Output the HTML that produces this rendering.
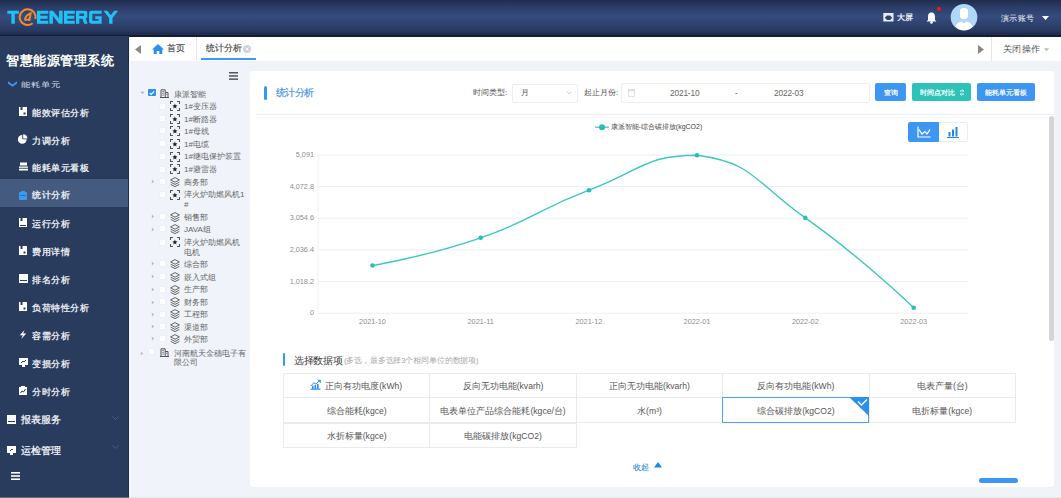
<!DOCTYPE html>
<html><head><meta charset="utf-8">
<style>
*{margin:0;padding:0;box-sizing:border-box}
html,body{width:1061px;height:498px;overflow:hidden;font-family:"Liberation Sans",sans-serif;background:#f0f3f8;position:relative}
.abs{position:absolute}
#hdr{left:0;top:0;width:1061px;height:37px;background:linear-gradient(#212c4c 0%,#2c3d68 20%,#364c7e 44%,#2f436f 65%,#27375f 84%,#202d50 93%,#161e36 96%,#131a2f 100%)}
#side{left:0;top:36px;width:129px;height:462px;background:#2a3c5e;overflow:hidden}
#tabs{left:130px;top:37px;width:931px;height:24px;background:#fff}
#tree{left:130px;top:61px;width:119px;height:437px;background:#f0f3f9}
#card{left:250px;top:70.5px;width:804px;height:416px;background:#fff;border-radius:3px}
.t{position:absolute;white-space:nowrap;line-height:1}
.mi{position:absolute;left:0;width:129px;height:28px}
.mi .tx{position:absolute;left:32px;top:9.5px;font-size:9px;letter-spacing:0.55px;-webkit-text-stroke:0.25px #f6f8fb;color:#f6f8fb;line-height:10px;white-space:nowrap}
.mi svg{position:absolute;left:19px;top:9.2px}
.tt{font-size:8px;color:#666;line-height:9px}
.btn{color:#fff;font-size:7px;line-height:19.5px;-webkit-text-stroke:0.2px #fff;text-align:center;border-radius:2px;white-space:nowrap}
.cell{border:1px solid #ebebeb;background:#fff;display:flex;align-items:center;justify-content:center;font-size:8.6px;color:#555;white-space:nowrap;padding-top:2.5px}
</style></head><body>
<div id="hdr" class="abs">
  <svg class="abs" style="left:0;top:0" width="130" height="36" viewBox="0 0 130 36">
    <g fill="#1ec2f7" fill-rule="evenodd">
    <path d="M7.3 10.7H18.9V13.7H14.8V23.7H11.4V13.7H7.3Z"/>
    <path d="M37 10.7H48.3V13.7H40.3V15.8H47.6V18.8H40.3V20.7H48.3V23.7H37Z"/>
    <path d="M49.4 23.7V10.7H53L59.1 18.6V10.7H62.6V23.7H59.1L52.9 15.7V23.7Z"/>
    <path d="M64 10.7H74.8V13.7H67.2V15.8H74.2V18.8H67.2V20.7H74.8V23.7H64Z"/>
    <path d="M76 23.7V10.7H85.3Q87.3 10.7 87.3 12.7V16.4Q87.3 18 85.8 18.4L87.6 23.7H84.1L82.6 18.8H79.3V23.7ZM79.3 13.6V16H84.1V13.6Z"/>
    <path d="M101.7 10.7H91.2Q89.1 10.7 89.1 12.8V21.6Q89.1 23.7 91.2 23.7H101.7V16.2H95.3V19H98.5V20.8H92.3V13.7H101.7Z"/>
    <path d="M103.4 10.7H107.4L110.8 15.3L114.2 10.7H118.1L112.5 18.1V23.7H109.1V18.1Z"/>
    </g>
    <path d="M32.6 23.3A7.9 7.9 0 1 1 35.3 19.1" stroke="#f08a2c" stroke-width="2" fill="none"/>
    <path d="M31.9 12.1L30.3 21H28L28.2 19.9C27.2 20.8 26 21.2 25 20.8C23.7 20.2 23.9 18.3 24.9 16.7C26.4 14.3 29.1 12.5 31.9 12.1ZM29.5 14.9C28 15.6 26.6 17 26.3 18.4C26.2 19.2 26.9 19.3 27.7 18.8L28.9 17.8Z" fill="#f08a2c" fill-rule="evenodd"/>
  </svg>
  <!-- right -->
  <svg class="abs" style="left:883px;top:12.5px" width="11" height="9" viewBox="0 0 11 9"><rect x="0.3" y="0" width="10.2" height="8.5" fill="#e8ecf4"/><path d="M1.8 4.8L4 2.6H7L9.2 4.8L7 7H4Z" fill="#2d4170"/></svg>
  <div class="t" style="left:896.5px;top:14px;font-size:8px;-webkit-text-stroke:0.2px #fff;letter-spacing:0.4px;color:#fff">大屏</div>
  <svg class="abs" style="left:926px;top:12px" width="11" height="12" viewBox="0 0 11 12"><path d="M5.5 0.5 C2.5 0.5 2 3 2 5.5 L2 8 L0.5 9.5 L10.5 9.5 L9 8 L9 5.5 C9 3 8.5 0.5 5.5 0.5Z" fill="#fff"/><circle cx="5.5" cy="10.5" r="1.3" fill="#fff"/></svg>
  <div class="abs" style="left:936.5px;top:6.5px;width:4px;height:4px;border-radius:50%;background:#f01818"></div>
  <svg class="abs" style="left:950px;top:3px" width="28" height="28" viewBox="0 0 28 28"><circle cx="14" cy="14.2" r="13.3" fill="#b0d7f8"/><path d="M10 7.5Q10 5 14 5Q18 5 18 7.5V12.5Q18 16.3 14 16.3Q10 16.3 10 12.5Z" fill="#fff"/><path d="M5.2 23.5Q7 19.2 12 18.6L14 20.6L16 18.6Q21 19.2 22.8 23.5Q19.5 27.2 14 27.2Q8.5 27.2 5.2 23.5Z" fill="#fff"/></svg>
  <div class="t" style="left:1001px;top:14.5px;font-size:8px;letter-spacing:0.35px;color:#eef1f7">演示账号</div>
  <svg class="abs" style="left:1042px;top:16px" width="7" height="4" viewBox="0 0 7 4"><path d="M0 0 L7 0 L3.5 4Z" fill="#fff"/></svg>
</div>

<div id="side" class="abs">
  <div class="t" style="left:6px;top:17.5px;font-size:13px;font-weight:bold;color:#fff;letter-spacing:0.55px">智慧能源管理系统</div>
  <div class="abs" style="left:0;top:44px;width:129px;height:9px;overflow:hidden">
    <svg class="abs" style="left:8px;top:1px" width="9" height="6" viewBox="0 0 9 6"><path d="M0 0.3L4.5 3.6L9 0.3V2.4L4.5 5.7L0 2.4Z" fill="#3a9af0"/></svg>
    <div class="t" style="left:21px;top:-1.5px;font-size:9.5px;color:#dfe4ee;transform:scaleY(0.75);transform-origin:0 100%">能耗单元</div>
  </div>
  <div class="mi" style="top:62px"><svg width="8" height="9" viewBox="0 0 8 9"><rect width="8" height="9" fill="#fff"/><rect x="1.5" y="0" width="2" height="3" fill="#2a3c5e"/><rect x="4.5" y="5.5" width="2" height="2" fill="#2a3c5e"/></svg><div class="tx">能效评估分析</div></div>
  <div class="mi" style="top:90px"><svg width="10" height="10" viewBox="0 0 10 10" style="left:18px;top:8px"><path d="M4.3 5.3L4.3 0.9A4.4 4.4 0 1 0 8.7 5.3Z" fill="#fff"/><path d="M5.2 4.4L5.2 0.2A4.2 4.2 0 0 1 9.4 4.4Z" fill="#fff"/></svg><div class="tx">力调分析</div></div>
  <div class="mi" style="top:117px"><svg width="9" height="9" viewBox="0 0 9 9"><rect x="1" y="0.5" width="7" height="3" fill="#fff"/><rect x="0" y="4.5" width="9" height="4" fill="#fff"/><rect x="0" y="5.8" width="9" height="0.9" fill="#2a3c5e"/></svg><div class="tx">能耗单元看板</div></div>
  <div class="mi" style="top:143px;height:28px;background:#445b7f"><svg width="8" height="9" viewBox="0 0 8 9" style="top:11.5px"><rect y="1" width="8" height="8" rx="1" fill="#3a9af0"/><rect x="2" y="0" width="4" height="2" fill="#3a9af0"/><rect x="1.5" y="4" width="5" height="1" fill="#2a6fb8"/></svg><div class="tx" style="top:11px">统计分析</div></div>
  <div class="mi" style="top:173px"><svg width="8" height="9" viewBox="0 0 8 9"><rect width="8" height="9" fill="#fff"/><rect x="1.5" y="0" width="2" height="3" fill="#2a3c5e"/><rect x="1" y="7" width="6" height="1" fill="#2a3c5e"/></svg><div class="tx">运行分析</div></div>
  <div class="mi" style="top:201px"><svg width="8" height="9" viewBox="0 0 8 9"><rect width="8" height="9" fill="#fff"/><rect x="1.5" y="0" width="2" height="3" fill="#2a3c5e"/><rect x="4.5" y="5.5" width="2" height="2" fill="#2a3c5e"/></svg><div class="tx">费用详情</div></div>
  <div class="mi" style="top:229px"><svg width="9" height="9" viewBox="0 0 9 9"><rect width="9" height="9" fill="#fff"/><rect x="1" y="6" width="7" height="1" fill="#2a3c5e"/></svg><div class="tx">排名分析</div></div>
  <div class="mi" style="top:257px"><svg width="8" height="9" viewBox="0 0 8 9"><rect width="8" height="9" fill="#fff"/><rect x="1.5" y="0" width="2" height="3" fill="#2a3c5e"/><rect x="4.5" y="5.5" width="2" height="2" fill="#2a3c5e"/></svg><div class="tx">负荷特性分析</div></div>
  <div class="mi" style="top:285px"><svg width="8" height="9" viewBox="0 0 8 9"><path d="M5.5 0 L0.8 5.2 L3.8 5.2 L2.3 9 L7.2 3.6 L4.2 3.6Z" fill="#fff"/></svg><div class="tx">容需分析</div></div>
  <div class="mi" style="top:313px"><svg width="9" height="9" viewBox="0 0 9 9"><rect width="9" height="7" fill="#fff"/><rect x="3" y="7" width="3" height="2" fill="#fff"/><path d="M2 5 L4 3 L5 4 L7 2" stroke="#2a3c5e" fill="none"/></svg><div class="tx">变损分析</div></div>
  <div class="mi" style="top:341px"><svg width="8" height="9" viewBox="0 0 8 9"><rect y="1" width="8" height="8" fill="#fff"/><rect x="2" y="0" width="4" height="2" fill="#fff"/><path d="M1.5 7 L3 5 L4.5 6 L6.5 3" stroke="#2a3c5e" fill="none"/></svg><div class="tx">分时分析</div></div>
  <div class="mi" style="top:369px"><svg width="9" height="9" viewBox="0 0 9 9" style="left:7px;top:10px"><rect width="9" height="9" fill="#fff"/><rect x="1" y="6" width="7" height="1" fill="#2a3c5e"/></svg><div class="tx" style="left:21px;top:10px;font-size:10px;letter-spacing:0">报表服务</div><svg width="7" height="5" viewBox="0 0 7 5" style="left:112px;top:10.5px"><path d="M0.5 0.5 L3.5 3.5 L6.5 0.5" stroke="#4a5e80" fill="none"/></svg></div>
  <div class="mi" style="top:400px"><svg width="9" height="9" viewBox="0 0 9 9" style="left:7px;top:10px"><rect width="9" height="7" fill="#fff"/><rect x="3" y="7" width="3" height="2" fill="#fff"/><path d="M3 5 L5 3 L6 4" stroke="#2a3c5e" fill="none"/></svg><div class="tx" style="left:21px;top:10px;font-size:10px;letter-spacing:0">运检管理</div><svg width="7" height="5" viewBox="0 0 7 5" style="left:112px;top:8.5px"><path d="M0.5 0.5 L3.5 3.5 L6.5 0.5" stroke="#4a5e80" fill="none"/></svg></div>
  <svg class="abs" style="left:11px;top:435.5px" width="9" height="8" viewBox="0 0 9 8"><rect y="0" width="9" height="1.6" fill="#fff"/><rect y="3.2" width="9" height="1.6" fill="#fff"/><rect y="6.4" width="9" height="1.6" fill="#fff"/></svg>
</div>
<div class="abs" style="left:128px;top:37px;width:1px;height:461px;background:#1c2848"></div><div class="abs" style="left:129px;top:61px;width:2px;height:436px;background:#fafbfd"></div>

<div id="tabs" class="abs">
  <svg class="abs" style="left:4.5px;top:8px" width="6" height="9" viewBox="0 0 6 9"><path d="M6 0 L0 4.5 L6 9Z" fill="#888"/></svg>
  <svg class="abs" style="left:22px;top:7.4px" width="12" height="10" viewBox="0 0 12 10"><path d="M6 0 L12 5.5 L10.3 5.5 L10.3 10 L7.3 10 L7.3 7 L4.7 7 L4.7 10 L1.7 10 L1.7 5.5 L0 5.5Z" fill="#2b8ff0"/></svg>
  <div class="t" style="left:36.5px;top:7px;font-size:9px;color:#484848;-webkit-text-stroke:0.15px #484848">首页</div>
  <div class="abs" style="left:66px;top:0;width:1px;height:24px;background:#e6e6e6"></div>
  <div class="t" style="left:75.5px;top:7px;font-size:9px;color:#484848;-webkit-text-stroke:0.15px #484848">统计分析</div>
  <svg class="abs" style="left:113px;top:8px" width="8" height="8" viewBox="0 0 8 8"><circle cx="4" cy="4" r="4" fill="#d2d2d2"/><path d="M2.6 2.6L5.4 5.4M5.4 2.6L2.6 5.4" stroke="#fff" stroke-width="0.9"/></svg>
  <div class="abs" style="left:71px;top:21px;width:55px;height:2px;background:#3a9af5"></div>
  <svg class="abs" style="left:848px;top:8px" width="6" height="9" viewBox="0 0 6 9"><path d="M0 0 L6 4.5 L0 9Z" fill="#888"/></svg>
  <div class="abs" style="left:861px;top:0;width:1px;height:24px;background:#e6e6e6"></div>
  <div class="t" style="left:872.5px;top:7.5px;font-size:9px;letter-spacing:0.6px;color:#555">关闭操作</div>
  <svg class="abs" style="left:914px;top:10.5px" width="6" height="4" viewBox="0 0 7 4"><path d="M0 0 L6 0 L3 3.5Z" fill="#bbb"/></svg>
</div>
<div id="tree" class="abs">
<div class="abs" style="left:0;top:-2px;width:119px;height:439px">
  <svg class="abs" style="left:98.5px;top:12.5px" width="9" height="8" viewBox="0 0 9 8"><rect y="0" width="9" height="1.5" fill="#555"/><rect y="3.2" width="9" height="1.5" fill="#555"/><rect y="6.4" width="9" height="1.5" fill="#555"/></svg>
<svg class="abs" style="left:10px;top:32px" width="5" height="4" viewBox="0 0 5 4"><path d="M0.5 0.8H4.5L2.5 3Z" fill="#b0b0b0"/></svg>
<div class="abs" style="left:18px;top:29.7px;width:7.6px;height:7.6px;background:#2b8ff0;border-radius:1px"><svg class="abs" style="left:0;top:0" width="8" height="8" viewBox="0 0 8 8"><path d="M1.6 3.9L3.2 5.4L6.2 2.3" stroke="#fff" stroke-width="1.2" fill="none"/></svg></div>
<svg class="abs" style="left:30.3px;top:29.6px" width="9" height="9" viewBox="0 0 9 9"><path d="M1 8.5V0.8H5.2V8.5M5.2 3.5H8V8.5M0 8.5H9" stroke="#555" stroke-width="1" fill="none"/><path d="M2.3 2.5H3.9M2.3 4.3H3.9M2.3 6.1H3.9M6 5.3H7.2" stroke="#555" stroke-width="0.8"/></svg>
<div class="t tt" style="left:44px;top:30.5px">康派智能</div>
<div class="abs" style="left:29px;top:43.7px;width:7px;height:7px;background:#fff;border:1px solid #edf0f4;border-radius:1px"></div>
<svg class="abs" style="left:40px;top:42.4px" width="10" height="10" viewBox="0 0 10 10"><path d="M0.5 3V0.5H3M7 0.5H9.5V3M9.5 7V9.5H7M3 9.5H0.5V7" stroke="#555" stroke-width="1.1" fill="none"/><path d="M4.90 2.60L5.61 4.33L7.47 4.47L6.04 5.67L6.49 7.48L4.90 6.50L3.31 7.48L3.76 5.67L2.33 4.47L4.19 4.33Z" fill="#222"/></svg>
<div class="t tt" style="left:54px;top:43.3px">1#变压器</div>
<div class="abs" style="left:29px;top:56px;width:7px;height:7px;background:#fff;border:1px solid #edf0f4;border-radius:1px"></div>
<svg class="abs" style="left:40px;top:54.7px" width="10" height="10" viewBox="0 0 10 10"><path d="M0.5 3V0.5H3M7 0.5H9.5V3M9.5 7V9.5H7M3 9.5H0.5V7" stroke="#555" stroke-width="1.1" fill="none"/><path d="M4.90 2.60L5.61 4.33L7.47 4.47L6.04 5.67L6.49 7.48L4.90 6.50L3.31 7.48L3.76 5.67L2.33 4.47L4.19 4.33Z" fill="#222"/></svg>
<div class="t tt" style="left:54px;top:55.6px">1#断路器</div>
<div class="abs" style="left:29px;top:68.4px;width:7px;height:7px;background:#fff;border:1px solid #edf0f4;border-radius:1px"></div>
<svg class="abs" style="left:40px;top:67.1px" width="10" height="10" viewBox="0 0 10 10"><path d="M0.5 3V0.5H3M7 0.5H9.5V3M9.5 7V9.5H7M3 9.5H0.5V7" stroke="#555" stroke-width="1.1" fill="none"/><path d="M4.90 2.60L5.61 4.33L7.47 4.47L6.04 5.67L6.49 7.48L4.90 6.50L3.31 7.48L3.76 5.67L2.33 4.47L4.19 4.33Z" fill="#222"/></svg>
<div class="t tt" style="left:54px;top:68px">1#母线</div>
<div class="abs" style="left:29px;top:81.2px;width:7px;height:7px;background:#fff;border:1px solid #edf0f4;border-radius:1px"></div>
<svg class="abs" style="left:40px;top:79.9px" width="10" height="10" viewBox="0 0 10 10"><path d="M0.5 3V0.5H3M7 0.5H9.5V3M9.5 7V9.5H7M3 9.5H0.5V7" stroke="#555" stroke-width="1.1" fill="none"/><path d="M4.90 2.60L5.61 4.33L7.47 4.47L6.04 5.67L6.49 7.48L4.90 6.50L3.31 7.48L3.76 5.67L2.33 4.47L4.19 4.33Z" fill="#222"/></svg>
<div class="t tt" style="left:54px;top:80.8px">1#电缆</div>
<div class="abs" style="left:29px;top:93.8px;width:7px;height:7px;background:#fff;border:1px solid #edf0f4;border-radius:1px"></div>
<svg class="abs" style="left:40px;top:92.5px" width="10" height="10" viewBox="0 0 10 10"><path d="M0.5 3V0.5H3M7 0.5H9.5V3M9.5 7V9.5H7M3 9.5H0.5V7" stroke="#555" stroke-width="1.1" fill="none"/><path d="M4.90 2.60L5.61 4.33L7.47 4.47L6.04 5.67L6.49 7.48L4.90 6.50L3.31 7.48L3.76 5.67L2.33 4.47L4.19 4.33Z" fill="#222"/></svg>
<div class="t tt" style="left:54px;top:93.4px">1#继电保护装置</div>
<div class="abs" style="left:29px;top:106.6px;width:7px;height:7px;background:#fff;border:1px solid #edf0f4;border-radius:1px"></div>
<svg class="abs" style="left:40px;top:105.3px" width="10" height="10" viewBox="0 0 10 10"><path d="M0.5 3V0.5H3M7 0.5H9.5V3M9.5 7V9.5H7M3 9.5H0.5V7" stroke="#555" stroke-width="1.1" fill="none"/><path d="M4.90 2.60L5.61 4.33L7.47 4.47L6.04 5.67L6.49 7.48L4.90 6.50L3.31 7.48L3.76 5.67L2.33 4.47L4.19 4.33Z" fill="#222"/></svg>
<div class="t tt" style="left:54px;top:106.2px">1#避雷器</div>
<svg class="abs" style="left:21px;top:120.3px" width="4" height="5" viewBox="0 0 4 5"><path d="M0.8 0.5V4.5L3.2 2.5Z" fill="#bdbdbd"/></svg>
<div class="abs" style="left:29px;top:119.2px;width:7px;height:7px;background:#fff;border:1px solid #edf0f4;border-radius:1px"></div>
<svg class="abs" style="left:40px;top:117.9px" width="10" height="10" viewBox="0 0 10 10"><path d="M5 0.6L9.4 2.9L5 5.2L0.6 2.9Z" stroke="#555" stroke-width="0.9" fill="none"/><path d="M0.7 5.2L5 7.4L9.3 5.2M0.7 7.4L5 9.6L9.3 7.4" stroke="#555" stroke-width="0.9" fill="none"/></svg>
<div class="t tt" style="left:54px;top:118.8px">商务部</div>
<div class="abs" style="left:29px;top:131.8px;width:7px;height:7px;background:#fff;border:1px solid #edf0f4;border-radius:1px"></div>
<svg class="abs" style="left:40px;top:130.5px" width="10" height="10" viewBox="0 0 10 10"><path d="M0.5 3V0.5H3M7 0.5H9.5V3M9.5 7V9.5H7M3 9.5H0.5V7" stroke="#555" stroke-width="1.1" fill="none"/><path d="M4.90 2.60L5.61 4.33L7.47 4.47L6.04 5.67L6.49 7.48L4.90 6.50L3.31 7.48L3.76 5.67L2.33 4.47L4.19 4.33Z" fill="#222"/></svg>
<div class="t tt" style="left:54px;top:131.4px">淬火炉助燃风机1</div>
<div class="t tt" style="left:54px;top:140.6px">#</div>
<svg class="abs" style="left:21px;top:155.1px" width="4" height="5" viewBox="0 0 4 5"><path d="M0.8 0.5V4.5L3.2 2.5Z" fill="#bdbdbd"/></svg>
<div class="abs" style="left:29px;top:154px;width:7px;height:7px;background:#fff;border:1px solid #edf0f4;border-radius:1px"></div>
<svg class="abs" style="left:40px;top:152.7px" width="10" height="10" viewBox="0 0 10 10"><path d="M5 0.6L9.4 2.9L5 5.2L0.6 2.9Z" stroke="#555" stroke-width="0.9" fill="none"/><path d="M0.7 5.2L5 7.4L9.3 5.2M0.7 7.4L5 9.6L9.3 7.4" stroke="#555" stroke-width="0.9" fill="none"/></svg>
<div class="t tt" style="left:54px;top:153.6px">销售部</div>
<svg class="abs" style="left:21px;top:167.5px" width="4" height="5" viewBox="0 0 4 5"><path d="M0.8 0.5V4.5L3.2 2.5Z" fill="#bdbdbd"/></svg>
<div class="abs" style="left:29px;top:166.4px;width:7px;height:7px;background:#fff;border:1px solid #edf0f4;border-radius:1px"></div>
<svg class="abs" style="left:40px;top:165.1px" width="10" height="10" viewBox="0 0 10 10"><path d="M5 0.6L9.4 2.9L5 5.2L0.6 2.9Z" stroke="#555" stroke-width="0.9" fill="none"/><path d="M0.7 5.2L5 7.4L9.3 5.2M0.7 7.4L5 9.6L9.3 7.4" stroke="#555" stroke-width="0.9" fill="none"/></svg>
<div class="t tt" style="left:54px;top:166px">JAVA组</div>
<div class="abs" style="left:29px;top:179.7px;width:7px;height:7px;background:#fff;border:1px solid #edf0f4;border-radius:1px"></div>
<svg class="abs" style="left:40px;top:178.4px" width="10" height="10" viewBox="0 0 10 10"><path d="M0.5 3V0.5H3M7 0.5H9.5V3M9.5 7V9.5H7M3 9.5H0.5V7" stroke="#555" stroke-width="1.1" fill="none"/><path d="M4.90 2.60L5.61 4.33L7.47 4.47L6.04 5.67L6.49 7.48L4.90 6.50L3.31 7.48L3.76 5.67L2.33 4.47L4.19 4.33Z" fill="#222"/></svg>
<div class="t tt" style="left:54px;top:179.3px">淬火炉助燃风机</div>
<div class="t tt" style="left:54px;top:188.5px">电机</div>
<svg class="abs" style="left:21px;top:202.1px" width="4" height="5" viewBox="0 0 4 5"><path d="M0.8 0.5V4.5L3.2 2.5Z" fill="#bdbdbd"/></svg>
<div class="abs" style="left:29px;top:201px;width:7px;height:7px;background:#fff;border:1px solid #edf0f4;border-radius:1px"></div>
<svg class="abs" style="left:40px;top:199.7px" width="10" height="10" viewBox="0 0 10 10"><path d="M5 0.6L9.4 2.9L5 5.2L0.6 2.9Z" stroke="#555" stroke-width="0.9" fill="none"/><path d="M0.7 5.2L5 7.4L9.3 5.2M0.7 7.4L5 9.6L9.3 7.4" stroke="#555" stroke-width="0.9" fill="none"/></svg>
<div class="t tt" style="left:54px;top:200.6px">综合部</div>
<svg class="abs" style="left:21px;top:215px" width="4" height="5" viewBox="0 0 4 5"><path d="M0.8 0.5V4.5L3.2 2.5Z" fill="#bdbdbd"/></svg>
<div class="abs" style="left:29px;top:213.9px;width:7px;height:7px;background:#fff;border:1px solid #edf0f4;border-radius:1px"></div>
<svg class="abs" style="left:40px;top:212.6px" width="10" height="10" viewBox="0 0 10 10"><path d="M5 0.6L9.4 2.9L5 5.2L0.6 2.9Z" stroke="#555" stroke-width="0.9" fill="none"/><path d="M0.7 5.2L5 7.4L9.3 5.2M0.7 7.4L5 9.6L9.3 7.4" stroke="#555" stroke-width="0.9" fill="none"/></svg>
<div class="t tt" style="left:54px;top:213.5px">嵌入式组</div>
<svg class="abs" style="left:21px;top:227.9px" width="4" height="5" viewBox="0 0 4 5"><path d="M0.8 0.5V4.5L3.2 2.5Z" fill="#bdbdbd"/></svg>
<div class="abs" style="left:29px;top:226.8px;width:7px;height:7px;background:#fff;border:1px solid #edf0f4;border-radius:1px"></div>
<svg class="abs" style="left:40px;top:225.5px" width="10" height="10" viewBox="0 0 10 10"><path d="M5 0.6L9.4 2.9L5 5.2L0.6 2.9Z" stroke="#555" stroke-width="0.9" fill="none"/><path d="M0.7 5.2L5 7.4L9.3 5.2M0.7 7.4L5 9.6L9.3 7.4" stroke="#555" stroke-width="0.9" fill="none"/></svg>
<div class="t tt" style="left:54px;top:226.4px">生产部</div>
<svg class="abs" style="left:21px;top:240.5px" width="4" height="5" viewBox="0 0 4 5"><path d="M0.8 0.5V4.5L3.2 2.5Z" fill="#bdbdbd"/></svg>
<div class="abs" style="left:29px;top:239.4px;width:7px;height:7px;background:#fff;border:1px solid #edf0f4;border-radius:1px"></div>
<svg class="abs" style="left:40px;top:238.1px" width="10" height="10" viewBox="0 0 10 10"><path d="M5 0.6L9.4 2.9L5 5.2L0.6 2.9Z" stroke="#555" stroke-width="0.9" fill="none"/><path d="M0.7 5.2L5 7.4L9.3 5.2M0.7 7.4L5 9.6L9.3 7.4" stroke="#555" stroke-width="0.9" fill="none"/></svg>
<div class="t tt" style="left:54px;top:239px">财务部</div>
<svg class="abs" style="left:21px;top:252.8px" width="4" height="5" viewBox="0 0 4 5"><path d="M0.8 0.5V4.5L3.2 2.5Z" fill="#bdbdbd"/></svg>
<div class="abs" style="left:29px;top:251.7px;width:7px;height:7px;background:#fff;border:1px solid #edf0f4;border-radius:1px"></div>
<svg class="abs" style="left:40px;top:250.4px" width="10" height="10" viewBox="0 0 10 10"><path d="M5 0.6L9.4 2.9L5 5.2L0.6 2.9Z" stroke="#555" stroke-width="0.9" fill="none"/><path d="M0.7 5.2L5 7.4L9.3 5.2M0.7 7.4L5 9.6L9.3 7.4" stroke="#555" stroke-width="0.9" fill="none"/></svg>
<div class="t tt" style="left:54px;top:251.3px">工程部</div>
<svg class="abs" style="left:21px;top:265.2px" width="4" height="5" viewBox="0 0 4 5"><path d="M0.8 0.5V4.5L3.2 2.5Z" fill="#bdbdbd"/></svg>
<div class="abs" style="left:29px;top:264.1px;width:7px;height:7px;background:#fff;border:1px solid #edf0f4;border-radius:1px"></div>
<svg class="abs" style="left:40px;top:262.8px" width="10" height="10" viewBox="0 0 10 10"><path d="M5 0.6L9.4 2.9L5 5.2L0.6 2.9Z" stroke="#555" stroke-width="0.9" fill="none"/><path d="M0.7 5.2L5 7.4L9.3 5.2M0.7 7.4L5 9.6L9.3 7.4" stroke="#555" stroke-width="0.9" fill="none"/></svg>
<div class="t tt" style="left:54px;top:263.7px">渠道部</div>
<svg class="abs" style="left:21px;top:277.3px" width="4" height="5" viewBox="0 0 4 5"><path d="M0.8 0.5V4.5L3.2 2.5Z" fill="#bdbdbd"/></svg>
<div class="abs" style="left:29px;top:276.2px;width:7px;height:7px;background:#fff;border:1px solid #edf0f4;border-radius:1px"></div>
<svg class="abs" style="left:40px;top:274.9px" width="10" height="10" viewBox="0 0 10 10"><path d="M5 0.6L9.4 2.9L5 5.2L0.6 2.9Z" stroke="#555" stroke-width="0.9" fill="none"/><path d="M0.7 5.2L5 7.4L9.3 5.2M0.7 7.4L5 9.6L9.3 7.4" stroke="#555" stroke-width="0.9" fill="none"/></svg>
<div class="t tt" style="left:54px;top:275.8px">外贸部</div>
<svg class="abs" style="left:10px;top:291.7px" width="4" height="5" viewBox="0 0 4 5"><path d="M0.8 0.5V4.5L3.2 2.5Z" fill="#bdbdbd"/></svg>
<div class="abs" style="left:18px;top:289.4px;width:7px;height:7px;background:#fff;border:1px solid #edf0f4;border-radius:1px"></div>
<svg class="abs" style="left:30.3px;top:289.3px" width="9" height="9" viewBox="0 0 9 9"><path d="M1 8.5V0.8H5.2V8.5M5.2 3.5H8V8.5M0 8.5H9" stroke="#555" stroke-width="1" fill="none"/><path d="M2.3 2.5H3.9M2.3 4.3H3.9M2.3 6.1H3.9M6 5.3H7.2" stroke="#555" stroke-width="0.8"/></svg>
<div class="t tt" style="left:44px;top:290.2px">河南航天金穗电子有</div>
<div class="t tt" style="left:44px;top:299.4px">限公司</div>
</div>
</div>
<div id="card" class="abs"></div>
<div class="abs" style="left:256px;top:114px;width:798px;height:1px;background:#eceef1"></div>
<div class="abs" style="left:256px;top:117px;width:798px;height:1px;background:#f5f6f7"></div>
<div class="abs" style="left:263.5px;top:85.5px;width:3px;height:14px;border-radius:1.5px;background:#3399f3"></div>
<div class="t" style="left:275.5px;top:88px;font-size:10px;letter-spacing:-0.5px;color:#3a8ee6;-webkit-text-stroke:0.15px #3a8ee6">统计分析</div>
<div class="t" style="left:473px;top:89px;font-size:8px;color:#555">时间类型:</div>
<div class="abs" style="left:512px;top:83.5px;width:66px;height:19.5px;border:1px solid #eceef1;border-radius:2px;background:#fff"></div>
<div class="t" style="left:521px;top:89px;font-size:8px;color:#555">月</div>
<svg class="abs" style="left:566px;top:91px" width="6" height="4" viewBox="0 0 6 4"><path d="M0.5 0.5L3 3L5.5 0.5" stroke="#c8c8c8" stroke-width="0.8" fill="none"/></svg>
<div class="t" style="left:584px;top:89px;font-size:8px;color:#555">起止月份:</div>
<div class="abs" style="left:621px;top:83px;width:249px;height:19.5px;border:1px solid #eceef1;border-radius:2px;background:#fff"></div>
<svg class="abs" style="left:627.8px;top:89.3px" width="7" height="8" viewBox="0 0 7 8"><rect x="0.5" y="0.5" width="6" height="6.8" fill="none" stroke="#dcdcdc" stroke-width="0.9"/><rect x="0.5" y="0.5" width="6" height="1.8" fill="#dcdcdc"/></svg>
<div class="t" style="left:670px;top:89px;font-size:8.3px;letter-spacing:-0.15px;color:#666">2021-10</div>
<div class="t" style="left:735px;top:89px;font-size:8.3px;color:#666">-</div>
<div class="t" style="left:774px;top:89px;font-size:8.3px;letter-spacing:-0.15px;color:#666">2022-03</div>
<div class="abs btn" style="left:875px;top:83px;width:31px;height:18px;background:#3d96f2">查询</div>
<div class="abs btn" style="left:911.5px;top:83px;width:59.5px;height:18px;background:#2ec3b9;padding-right:7px">时间点对比<svg class="abs" style="left:47px;top:5.5px" width="6" height="7" viewBox="0 0 6 7"><path d="M1 2H5L3.5 0.5M5 5H1L2.5 6.5" stroke="#fff" stroke-width="1" fill="none"/></svg></div>
<div class="abs btn" style="left:977px;top:83px;width:57.5px;height:18px;background:#3d96f2">能耗单元看板</div>
<svg class="abs" style="left:0;top:0" width="1061" height="498" viewBox="0 0 1061 498" font-family="Liberation Sans">
<line x1="318" y1="155" x2="968" y2="155" stroke="#eeeeee" stroke-width="1"/><line x1="318" y1="186.6" x2="968" y2="186.6" stroke="#eeeeee" stroke-width="1"/><line x1="318" y1="218.2" x2="968" y2="218.2" stroke="#eeeeee" stroke-width="1"/><line x1="318" y1="249.8" x2="968" y2="249.8" stroke="#eeeeee" stroke-width="1"/><line x1="318" y1="281.4" x2="968" y2="281.4" stroke="#eeeeee" stroke-width="1"/><line x1="318" y1="313.2" x2="968" y2="313.2" stroke="#eeeeee" stroke-width="1"/><line x1="318" y1="155" x2="318" y2="314" stroke="#f2f2f2"/><text x="314" y="156.9" text-anchor="end" font-size="7.3" fill="#8e8e8e">5,091</text><text x="314" y="188.5" text-anchor="end" font-size="7.3" fill="#8e8e8e">4,072.8</text><text x="314" y="220.2" text-anchor="end" font-size="7.3" fill="#8e8e8e">3,054.6</text><text x="314" y="251.9" text-anchor="end" font-size="7.3" fill="#8e8e8e">2,036.4</text><text x="314" y="283.6" text-anchor="end" font-size="7.3" fill="#8e8e8e">1,018.2</text><text x="314" y="315.2" text-anchor="end" font-size="7.3" fill="#8e8e8e">0</text><text x="372.5" y="323.5" text-anchor="middle" font-size="7.3" fill="#8e8e8e">2021-10</text><text x="480.7" y="323.5" text-anchor="middle" font-size="7.3" fill="#8e8e8e">2021-11</text><text x="588.9" y="323.5" text-anchor="middle" font-size="7.3" fill="#8e8e8e">2021-12</text><text x="697.0" y="323.5" text-anchor="middle" font-size="7.3" fill="#8e8e8e">2022-01</text><text x="805.3" y="323.5" text-anchor="middle" font-size="7.3" fill="#8e8e8e">2022-02</text><text x="913.7" y="323.5" text-anchor="middle" font-size="7.3" fill="#8e8e8e">2022-03</text>
<path d="M372.50 265.50 C372.50 265.50 428.13 256.09 480.70 237.80 C536.33 218.44 533.76 211.26 588.90 190.20 C641.91 169.96 645.51 155.20 697.00 155.20 C753.71 162.46 754.32 182.00 805.30 217.90 C862.67 258.30 913.70 307.80 913.70 307.80" stroke="#3cc7c2" stroke-width="1.4" fill="none"/><circle cx="372.5" cy="265.5" r="2.3" fill="#2bbdb8"/><circle cx="480.7" cy="237.8" r="2.3" fill="#2bbdb8"/><circle cx="588.9" cy="190.2" r="2.3" fill="#2bbdb8"/><circle cx="697.0" cy="155.2" r="2.3" fill="#2bbdb8"/><circle cx="805.3" cy="217.9" r="2.3" fill="#2bbdb8"/><circle cx="913.7" cy="307.8" r="2.3" fill="#2bbdb8"/>
<line x1="595" y1="127.2" x2="609" y2="127.2" stroke="#3cc7c2" stroke-width="1.2"/><circle cx="602" cy="127.2" r="3" fill="#2bbdb8"/>
</svg>
<div class="t" style="left:610.5px;top:123px;font-size:7px;color:#454545">康派智能-综合碳排放(kgCO2)</div>
<div class="abs" style="left:908px;top:122px;width:31px;height:20px;background:#3d96f2;border-radius:2px 0 0 2px"></div>
<svg class="abs" style="left:916.5px;top:126px" width="14" height="12" viewBox="0 0 14 12"><path d="M1 0.5V11H13.5" stroke="#fff" stroke-width="1.2" fill="none"/><path d="M2 3.5L5 8L8 5.5L10 8L13 3.5" stroke="#fff" stroke-width="1.2" fill="none"/></svg>
<div class="abs" style="left:939px;top:122px;width:28.5px;height:20px;border:1px solid #eeeeee;border-left:none;border-radius:0 2px 2px 0;background:#fff"></div>
<svg class="abs" style="left:946.5px;top:126px" width="13" height="12" viewBox="0 0 13 12"><rect x="1.5" y="6" width="2" height="4.5" fill="#1e88e5"/><rect x="5" y="3.5" width="2" height="7" fill="#1e88e5"/><rect x="8.5" y="1" width="2" height="9.5" fill="#1e88e5"/><rect x="0" y="11" width="12" height="1" fill="#1e88e5"/></svg>
<div class="abs" style="left:1049px;top:115.5px;width:5px;height:225px;border-radius:2.5px;background:#d5d5d5"></div>
<div class="abs" style="left:282.5px;top:352.5px;width:2.8px;height:13.5px;border-radius:1px;background:#3399f3"></div>
<div class="t" style="left:294px;top:355.5px;font-size:10px;letter-spacing:-0.35px;color:#3c3c3c">选择数据项</div>
<div class="t" style="left:344px;top:356.5px;font-size:7.6px;letter-spacing:-0.15px;color:#aaa">(多选，最多选择3个相同单位的数据项)</div>
<div class="abs cell" style="left:283px;top:372.5px;width:147.4px;height:25.9px"><span style="padding-left:14px">正向有功电度(kWh)</span></div>
<div class="abs cell" style="left:429.4px;top:372.5px;width:147.4px;height:25.9px"><span>反向无功电能(kvarh)</span></div>
<div class="abs cell" style="left:575.8px;top:372.5px;width:147.4px;height:25.9px"><span>正向无功电能(kvarh)</span></div>
<div class="abs cell" style="left:722.2px;top:372.5px;width:147.4px;height:25.9px"><span>反向有功电能(kWh)</span></div>
<div class="abs cell" style="left:868.6px;top:372.5px;width:147.4px;height:25.9px"><span>电表产量(台)</span></div>
<div class="abs cell" style="left:283px;top:397.4px;width:147.4px;height:26.1px"><span>综合能耗(kgce)</span></div>
<div class="abs cell" style="left:429.4px;top:397.4px;width:147.4px;height:26.1px"><span>电表单位产品综合能耗(kgce/台)</span></div>
<div class="abs cell" style="left:575.8px;top:397.4px;width:147.4px;height:26.1px"><span>水(m³)</span></div>
<div class="abs cell" style="left:722.2px;top:397.4px;width:147.4px;height:26.1px"><span>综合碳排放(kgCO2)</span></div>
<div class="abs cell" style="left:868.6px;top:397.4px;width:147.4px;height:26.1px"><span>电折标量(kgce)</span></div>
<div class="abs cell" style="left:283px;top:422.5px;width:147.4px;height:25.7px"><span>水折标量(kgce)</span></div>
<div class="abs cell" style="left:429.4px;top:422.5px;width:147.4px;height:25.7px"><span>电能碳排放(kgCO2)</span></div>
<div class="abs" style="left:722.2px;top:397.4px;width:146.8px;height:25.5px;border:1px solid #4fa3f5"></div>
<svg class="abs" style="left:849px;top:397.4px" width="20" height="19" viewBox="0 0 20 19"><path d="M0 0H20V19Z" fill="#2b8ff0"/><path d="M9 4.5L12.5 8L18 2.5" stroke="#fff" stroke-width="1.3" fill="none"/></svg>
<svg class="abs" style="left:310.2px;top:378.9px" width="11" height="11" viewBox="0 0 11 11"><path d="M0.3 10.2H10.5" stroke="#2b8ff0" stroke-width="1.1"/><path d="M2.8 10V6.8M5.3 10V6M7.8 10V5" stroke="#2b8ff0" stroke-width="1.6"/><path d="M0.8 7L3.8 3.8L6 5.2L9 2" stroke="#2b8ff0" stroke-width="1" fill="none"/><path d="M7.3 0.8H10.8V4.3Z" fill="#2b8ff0"/></svg>
<div class="t" style="left:633px;top:464px;font-size:7.5px;color:#3a8ee6;-webkit-text-stroke:0.15px #3a8ee6">收起</div>
<svg class="abs" style="left:654px;top:462px" width="8" height="5.5" viewBox="0 0 8 5.5"><path d="M0 5.5L4 0L8 5.5Z" fill="#1e88e5"/></svg>
<div class="abs" style="left:979px;top:478px;width:39px;height:4.6px;border-radius:2.3px;background:#3d96f2"></div>

<div class="abs" style="left:0;top:497px;width:129px;height:1px;background:#6a7080"></div>
<div class="abs" style="left:129px;top:497px;width:932px;height:1px;background:#e6e8ec"></div>
</body></html>
